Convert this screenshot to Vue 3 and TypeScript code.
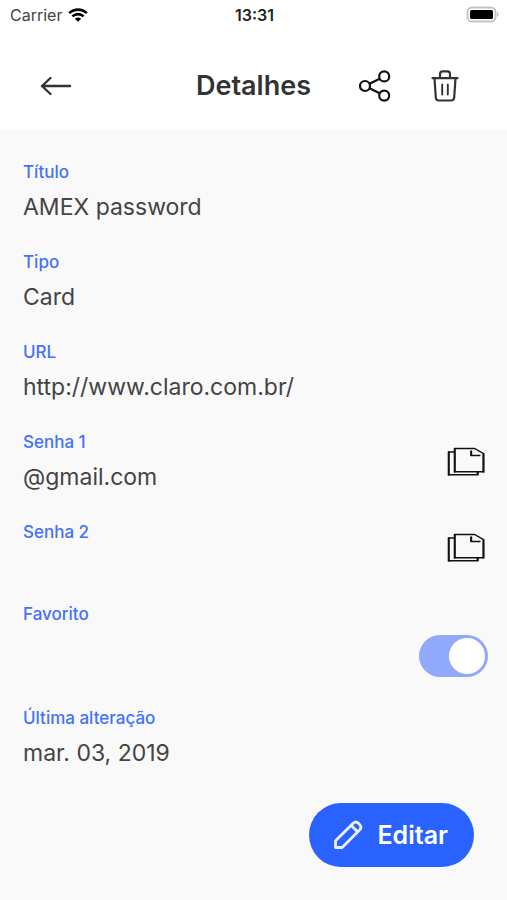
<script setup lang="ts">
import { ref } from 'vue'

interface Field {
  label: string
  value: string
  copyable?: boolean
}

const fields: Field[] = [
  { label: 'Título', value: 'AMEX password' },
  { label: 'Tipo', value: 'Card' },
  { label: 'URL', value: 'http://www.claro.com.br/' },
  { label: 'Senha 1', value: '@gmail.com', copyable: true },
  { label: 'Senha 2', value: '', copyable: true },
]

const favorite = ref(true)

function copy(value: string) {
  navigator.clipboard?.writeText(value)
}
</script>

<template>
  <div class="screen">
    <div class="status">
      <div class="carrier">
        <span>Carrier</span>
        <svg width="20" height="14" viewBox="0 0 20 14" fill="none" stroke="#000" stroke-width="2.6">
          <path d="M1.2 5.1C6.2 0.4 13.8 0.4 18.8 5.1" />
          <path d="M4.4 8.4C7.6 5.4 12.4 5.4 15.6 8.4" />
          <path d="M10 13.8L6.8 10.7C8.6 9.1 11.4 9.1 13.2 10.7Z" fill="#000" stroke="none" />
        </svg>
      </div>
      <time class="clock">13:31</time>
      <div class="battery">
        <svg width="33" height="18" viewBox="0 0 33 18">
          <rect x="1.5" y="1.5" width="28" height="14" rx="4.5" fill="#fff" stroke="#c4c4c4" stroke-width="2" />
          <rect x="4" y="4" width="23" height="9" rx="1.5" fill="#000" />
          <path d="M31.2 6.2C32.8 7 32.8 10 31.2 10.8Z" fill="#b0b0b0" />
        </svg>
      </div>
    </div>

    <header class="bar">
      <button class="icon-button back" type="button" aria-label="Voltar">
        <svg width="32" height="20" viewBox="0 0 32 20" fill="none" stroke="#333" stroke-width="2.4" stroke-linecap="round" stroke-linejoin="round">
          <path d="M30 10H2M10.5 2L2 10L10.5 18" />
        </svg>
      </button>
      <h1 class="title">Detalhes</h1>
      <div class="actions">
        <button class="icon-button" type="button" aria-label="Compartilhar">
          <svg width="32" height="32" viewBox="0 0 32 32" fill="none" stroke="#111" stroke-width="2.2">
            <circle cx="6" cy="16" r="5" />
            <circle cx="25.2" cy="6.4" r="5" />
            <circle cx="25.2" cy="25.6" r="5" />
            <path d="M10.5 13.7L20.7 8.7M10.5 18.3L20.7 23.3" />
          </svg>
        </button>
        <button class="icon-button" type="button" aria-label="Excluir">
          <svg width="28" height="32" viewBox="0 0 28 32" fill="none" stroke="#333" stroke-width="2.2" stroke-linecap="round" stroke-linejoin="round">
            <path d="M1.5 8.2H26.5" />
            <path d="M9 8V4Q9 1.3 11.5 1.3H16.5Q19 1.3 19 4V8" />
            <path d="M3.5 8.5L4.8 27.5Q5 30.5 8 30.5H20Q23 30.5 23.2 27.5L24.5 8.5" />
            <path d="M11.2 14.5V24.5M16.8 14.5V24.5" stroke-width="1.9" />
          </svg>
        </button>
      </div>
    </header>

    <main class="content">
      <div v-for="field in fields" :key="field.label" class="field">
        <dl class="pair">
          <dt class="label">{{ field.label }}</dt>
          <dd v-if="field.value" class="value">{{ field.value }}</dd>
        </dl>
        <button
          v-if="field.copyable"
          class="icon-button"
          type="button"
          :aria-label="`Copiar ${field.label}`"
          @click="copy(field.value)"
        >
          <svg width="38" height="30" viewBox="0 0 38 30" fill="none" stroke="#111" stroke-width="1.4">
            <path d="M7 5H1.7V27.8H30.8V25" />
            <path d="M7.7 1.5H27.5L36.6 6.7V24.8H7.7Z" />
            <path d="M24.2 3.5V8.5H33.5" />
            <path d="M1.7 4.5V28.5M7.7 1V25.5M36.4 6.6V25.5M24.2 3.8V9M30.6 25V28" stroke-width="2" />
          </svg>
        </button>
      </div>

      <div class="pair">
        <label class="label" for="favorite">Favorito</label>
        <input id="favorite" v-model="favorite" class="switch" type="checkbox" role="switch" />
      </div>

      <dl class="pair">
        <dt class="label">Última alteração</dt>
        <dd class="value">mar. 03, 2019</dd>
      </dl>

      <button class="edit" type="button">
        <svg width="30" height="30" viewBox="0 0 30 30" fill="none" stroke="#fff" stroke-opacity="0.9" stroke-width="2.8" stroke-linejoin="round">
          <path d="M2.5 27.5V20.8L20.2 3.2Q22.8 0.8 25.6 3.4L26.6 4.4Q29.2 7.2 26.8 9.8L9.2 27.5Z" />
          <path d="M18.2 5.4L24.6 11.8" />
        </svg>
        <span>Editar</span>
      </button>
    </main>
  </div>
</template>

<style>
body {
  background: #f9f9f9;
}
</style>

<style scoped>
.screen {
  min-height: 100vh;
  font-family: Inter, "Liberation Sans", sans-serif;
  color: #444;
  background: #f9f9f9;
}

.status {
  display: grid;
  grid-template-columns: 1fr auto 1fr;
  align-items: center;
  height: 30px;
  padding: 0 8px 0 10px;
  font-size: 16px;
  line-height: 20px;
  background: #fff;
}

.carrier {
  display: flex;
  align-items: center;
  gap: 6px;
}

.clock {
  font-weight: 600;
  color: #222;
}

.battery {
  display: flex;
  justify-content: flex-end;
}

.status svg,
.icon-button svg,
.edit svg {
  display: block;
}

.bar {
  display: grid;
  grid-template-columns: 1fr auto 1fr;
  align-items: center;
  height: 100px;
  padding: 12px 48px 0 40px;
  box-sizing: border-box;
  background: #fff;
}

.back {
  justify-self: start;
}

.title {
  margin: 0 0 0 8px;
  font-size: 27px;
  line-height: 32px;
  font-weight: 600;
  color: #333;
}

.actions {
  display: flex;
  justify-content: flex-end;
  gap: 40px;
}

.icon-button {
  flex: none;
  padding: 0;
  border: 0;
  background: none;
  cursor: pointer;
}

.content {
  display: flex;
  flex-direction: column;
  gap: 31px;
  padding: 32px 19px 32px 23px;
}

.field {
  display: flex;
  align-items: center;
  justify-content: space-between;
  padding-right: 3px;
}

.pair {
  display: flex;
  flex-direction: column;
  gap: 11px;
  min-height: 51px;
  margin: 0;
}

.label {
  font-size: 17px;
  line-height: 20px;
  font-weight: 500;
  color: #4472f5;
}

.value {
  margin: 0;
  font-size: 23px;
  line-height: 28px;
}

.switch {
  appearance: none;
  align-self: flex-end;
  display: flex;
  align-items: center;
  width: 69px;
  height: 42px;
  margin: 0;
  padding: 0 3px;
  border-radius: 21px;
  background: #c8c8c8;
  cursor: pointer;
}

.switch::before {
  content: "";
  width: 36px;
  height: 36px;
  border-radius: 50%;
  background: #fff;
}

.switch:checked {
  justify-content: flex-end;
  background: #91a9fa;
}

.edit {
  display: flex;
  align-items: center;
  align-self: flex-end;
  gap: 14px;
  height: 64px;
  margin: 5px 14px 0 0;
  padding: 0 26px 0 24px;
  border: 0;
  border-radius: 32px;
  font-family: inherit;
  font-size: 25px;
  font-weight: 600;
  color: #fff;
  background: #2962ff;
  cursor: pointer;
}
</style>
